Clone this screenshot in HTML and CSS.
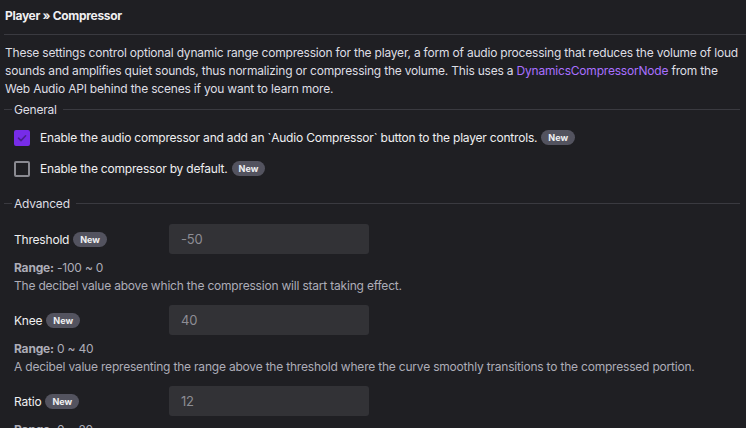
FILE: index.html
```html
<!DOCTYPE html>
<html>
<head>
<meta charset="utf-8">
<link rel="stylesheet" href="styles.css">
</head>
<body>
<div class="page">
  <div class="header">Player » Compressor</div>
  <p class="intro">These settings control optional dynamic range compression for the player, a form of audio processing that reduces the volume of loud sounds and amplifies quiet sounds, thus normalizing or compressing the volume. This uses a <a class="link">DynamicsCompressorNode</a> from the Web Audio API behind the scenes if you want to learn more.</p>

  <section class="group">
    <div class="legend"><span>General</span></div>
    <label class="check-row first">
      <span class="box checked"><svg viewBox="0 0 16 16" width="16" height="16"><path d="M4.5 8.2 L7 10.6 L11.6 5.8" fill="none" stroke="#4a1f91" stroke-width="1.6" stroke-linecap="round" stroke-linejoin="round"/></svg></span>
      <span class="check-text">Enable the audio compressor and add an `Audio Compressor` button to the player controls.</span>
      <span class="badge">New</span>
    </label>
    <label class="check-row">
      <span class="box"></span>
      <span class="check-text">Enable the compressor by default.</span>
      <span class="badge">New</span>
    </label>
  </section>

  <section class="group adv">
    <div class="legend"><span>Advanced</span></div>
    <div class="field first">
      <div class="field-row">
        <div class="field-label">Threshold <span class="badge">New</span></div>
        <div class="input">-50</div>
      </div>
      <div class="range"><b>Range:</b> -100 ~ 0</div>
      <div class="desc">The decibel value above which the compression will start taking effect.</div>
    </div>
    <div class="field">
      <div class="field-row">
        <div class="field-label">Knee <span class="badge">New</span></div>
        <div class="input">40</div>
      </div>
      <div class="range"><b>Range:</b> 0 ~ 40</div>
      <div class="desc">A decibel value representing the range above the threshold where the curve smoothly transitions to the compressed portion.</div>
    </div>
    <div class="field">
      <div class="field-row">
        <div class="field-label">Ratio <span class="badge">New</span></div>
        <div class="input">12</div>
      </div>
      <div class="range"><b>Range:</b> 0 ~ 20</div>
      <div class="desc">The amount of change, in dB, needed in the input for a 1 dB change in the output.</div>
    </div>
  </section>
</div>
</body>
</html>
```
FILE: styles.css
```css
html, body {
  margin: 0;
  padding: 0;
  background: #1f1f23;
  overflow: hidden;
}
body {
  font-family: Inter, "Noto Sans", sans-serif;
  font-size: 12px;
  letter-spacing: -0.2px;
  color: #efeff1;
}
.page {
  padding: 0 0 0 4px;
}
.header {
  font-weight: 700;
  font-size: 12px;
  line-height: 16px;
  padding: 8px 0 10px 1px;
  border-bottom: 1px solid #3a3a40;
  letter-spacing: -0.3px;
}
.intro {
  margin: 9px 6px 0 1px;
  line-height: 18px;
  color: #dedee3;
}
.link {
  color: #a970ff;
  text-decoration: none;
}
.group {
  margin-right: 6px;
}
.legend {
  display: flex;
  align-items: center;
  gap: 2px;
  height: 18px;
  margin-top: 2px;
  color: #dedee3;
}
.legend::before {
  content: "";
  width: 8px;
  border-top: 1px solid #3a3a40;
}
.legend::after {
  content: "";
  flex: 1;
  margin-left: 4px;
  border-top: 1px solid #3a3a40;
}
.check-row {
  display: flex;
  align-items: center;
  height: 31px;
  padding-left: 10px;
  color: #efeff1;
}
.check-row.first {
  margin-top: 4px;
}
.box {
  width: 12px;
  height: 12px;
  border: 2px solid #8a8a91;
  border-radius: 2px;
  margin-right: 10px;
  position: relative;
  flex: none;
}
.box.checked {
  background: #772ce8;
  border-color: #772ce8;
}
.box svg {
  position: absolute;
  left: -2px;
  top: -2px;
}
.check-text {
  margin-right: 4px;
}
.badge {
  display: inline-block;
  background: #53535f;
  color: #efeff1;
  font-weight: 700;
  font-size: 9px;
  letter-spacing: 0;
  line-height: 15px;
  padding: 0 7px;
  border-radius: 8px;
  vertical-align: middle;
}
.adv .legend {
  margin-top: 10px;
}
.field {
  padding-left: 10px;
  margin-bottom: 10px;
}
.field.first {
  margin-top: 12px;
}
.field-row {
  display: flex;
  align-items: center;
}
.field-label {
  width: 155px;
  display: flex;
  align-items: center;
  gap: 4px;
}
.input {
  width: 182px;
  height: 30px;
  line-height: 30px;
  padding: 0 6px 0 12px;
  background: #323236;
  border-radius: 3px;
  color: #8d8d94;
  font-size: 13px;
}
.range {
  margin-top: 5px;
  line-height: 18px;
  color: #adadb8;
}
.range b {
  font-weight: 700;
}
.desc {
  line-height: 18px;
  color: #adadb8;
}
```
